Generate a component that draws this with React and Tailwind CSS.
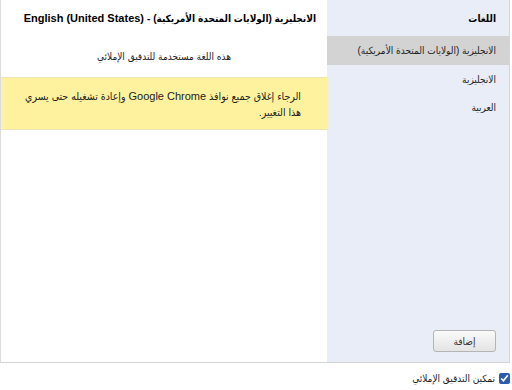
// Language settings dialog (RTL)

const languages = [
  { id: 'en-US', label: 'الانجليزية (الولايات المتحدة الأمريكية)' },
  { id: 'en', label: 'الانجليزية' },
  { id: 'ar', label: 'العربية' },
];

function LanguageList({ selected }) {
  return (
    <div className="w-[183px] shrink-0 bg-[#e9edf8] border-r border-[#d4d6dc] flex flex-col">
      <div className="h-[36px] flex items-center pr-[13px] text-[10px] font-bold text-black">اللغات</div>
      {languages.map((l) => (
        <div key={l.id}
          className={`flex items-center pr-[13px] text-[10px] text-[#222] whitespace-nowrap ${l.id === selected ? 'bg-[#d3d3d3] h-[29px]' : 'h-[28px]'}`}>
          {l.label}
        </div>
      ))}
      <div className="mt-auto flex justify-start pr-[13px] pb-[10px]">
        <button
          className="w-[63px] h-[22px] rounded-[3px] border border-[#b4b4b4] bg-gradient-to-b from-[#fafafa] to-[#e4e4e4] text-[10px] text-[#333]">
          إضافة
        </button>
      </div>
    </div>
  );
}

function LanguageDetail() {
  return (
    <div className="flex-1 bg-white border-l border-[#dcdcdc] flex flex-col">
      <div className="h-[36px] flex items-center pr-[11px] text-[10px] font-bold text-black whitespace-nowrap">
        الانجليزية (الولايات المتحدة الأمريكية) - <span className="text-[11px] mr-[3px]">English (United States)</span>
      </div>
      <div className="h-[41px] flex items-center justify-center text-[10px] text-[#222]">
        هذه اللغة مستخدمة للتدقيق الإملائي
      </div>
      <div className="bg-[#fff29e] border-t border-[#ece5b5] border-b border-[#c9c7b0] pr-[26px] pl-[12px] pt-[10px] pb-[9px] text-[10.5px] leading-[16px] text-[#222]">
        الرجاء إغلاق جميع نوافذ <span className="text-[11px]">Google Chrome</span> وإعادة تشغيله حتى يسري
        <br />
        هذا التغيير.
      </div>
    </div>
  );
}

export default function App() {
  return (
    <div dir="rtl" className="w-[512px] h-[390px] bg-white overflow-hidden font-stretch-condensed"
      style={{ fontFamily: '"Liberation Sans", "DejaVu Sans Condensed", "DejaVu Sans", sans-serif' }}>
      <div className="w-[510px] h-[363px] flex border-b border-[#d4d4d4] mr-[2px]">
        <LanguageList selected="en-US" />
        <LanguageDetail />
      </div>
      <label className="flex items-center gap-[4px] mt-[8px] pr-[2px] text-[10px] text-[#222]">
        <input type="checkbox" defaultChecked className="w-[11px] h-[11px] m-0 accent-[#2a5db0]" />
        تمكين التدقيق الإملائي
      </label>
    </div>
  );
}
